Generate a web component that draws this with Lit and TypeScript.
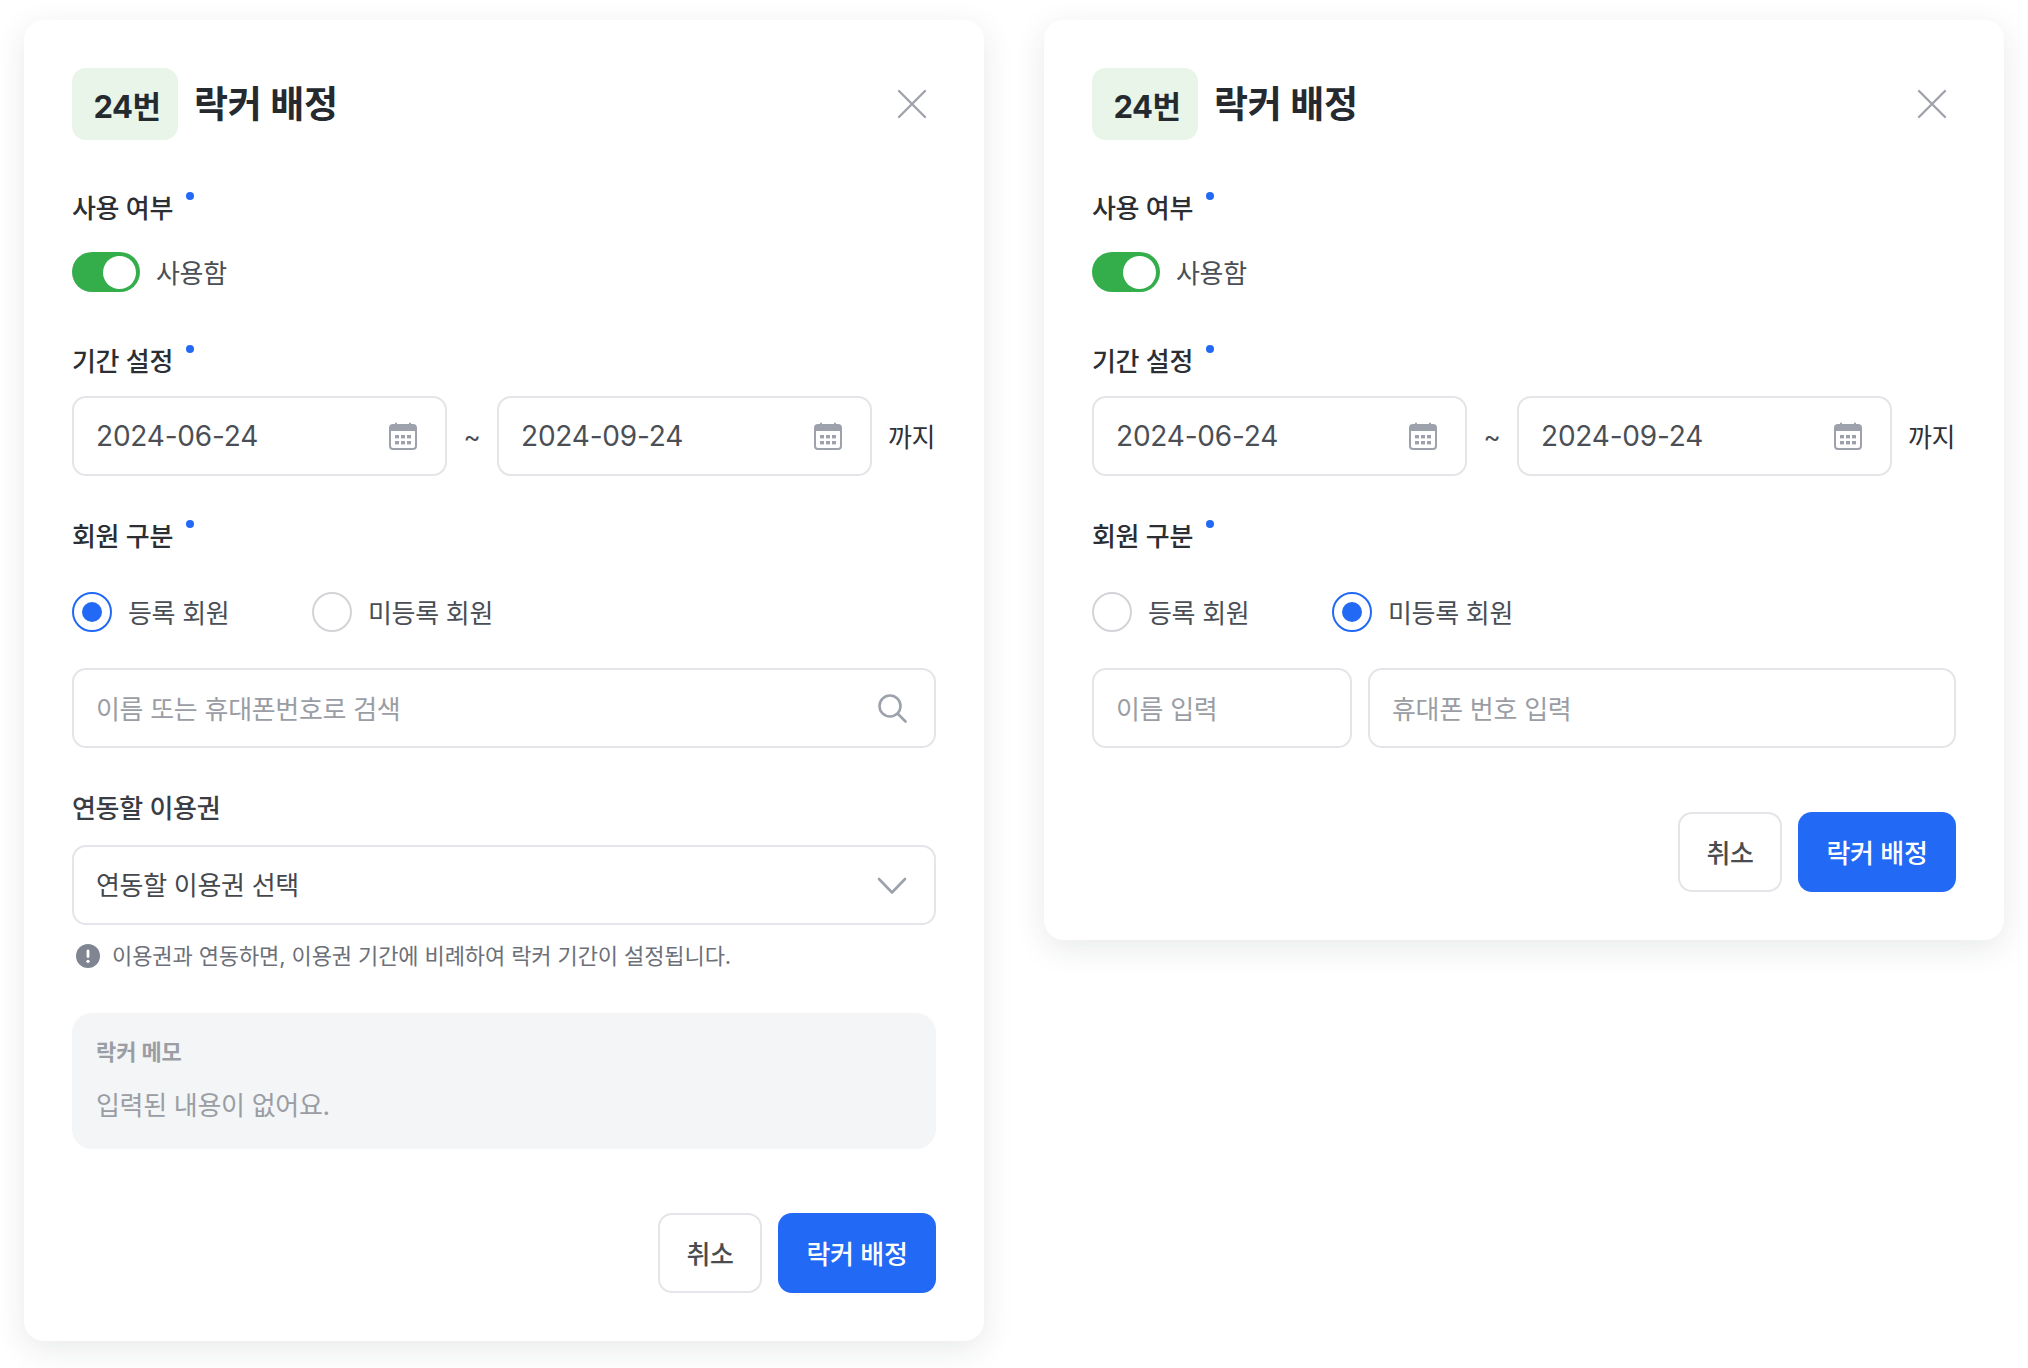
import { LitElement, html, css, svg } from "lit";
import { customElement, property } from "lit/decorators.js";

const closeIcon = svg`<svg class="ico-close" width="32" height="32" viewBox="0 0 32 32" fill="none" stroke="#A0A3AB" stroke-width="2.4" stroke-linecap="round"><path d="M3 3L29 29M29 3L3 29"/></svg>`;
const calIcon = svg`<svg width="30" height="30" viewBox="0 0 30 30" fill="none"><path d="M8 2.5V5M22 2.5V5" stroke="#9CA1AB" stroke-width="2" stroke-linecap="round"/><rect x="2" y="4" width="26" height="24" rx="3" fill="#fff" stroke="#9CA1AB" stroke-width="2"/><path d="M2 7a3 3 0 0 1 3-3h20a3 3 0 0 1 3 3v3H2z" fill="#9CA1AB"/><g fill="#9CA1AB"><rect x="7" y="14" width="4" height="3.4"/><rect x="13" y="14" width="4" height="3.4"/><rect x="19" y="14" width="4" height="3.4"/><rect x="7" y="20" width="4" height="3.4"/><rect x="13" y="20" width="4" height="3.4"/><rect x="19" y="20" width="4" height="3.4"/></g></svg>`;
const searchIcon = svg`<svg width="30" height="30" viewBox="0 0 30 30" fill="none" stroke="#9CA1AB" stroke-width="2.6" stroke-linecap="round"><circle cx="13" cy="13" r="10.5"/><path d="M21 21L28.5 28.5"/></svg>`;
const chevronIcon = svg`<svg class="chev" width="30" height="18" viewBox="0 0 30 18" fill="none" stroke="#9CA1AB" stroke-width="2.6" stroke-linecap="round" stroke-linejoin="round"><path d="M2 2L15 15.5L28 2"/></svg>`;
const infoIcon = svg`<svg width="24" height="24" viewBox="0 0 24 24"><circle cx="12" cy="12" r="12" fill="#7F8692"/><rect x="10.6" y="5.5" width="2.8" height="8.5" rx="1.4" fill="#fff"/><circle cx="12" cy="17.3" r="1.6" fill="#fff"/></svg>`;

@customElement("locker-card")
class LockerCard extends LitElement {
  @property() mode: "member" | "guest" = "member";

  static styles = css`
    :host { display: block; width: 960px; }
    * { box-sizing: border-box; }
    .card {
      background: #fff; border-radius: 20px; padding: 48px;
      box-shadow: 0 8px 32px rgba(30, 35, 45, 0.1);
      display: flex; flex-direction: column;
      font-family: Inter, "Noto Sans CJK KR", sans-serif;
    }
    .head { display: flex; align-items: center; height: 72px; gap: 16px; }
    .badge {
      width: 106px; height: 72px; border-radius: 14px; background: #E9F5E9;
      display: flex; align-items: center; justify-content: center; padding-left: 4px;
      font-size: 31px; font-weight: 700; color: #252A2E; letter-spacing: -0.5px;
    }
    .title { font-size: 37px; font-weight: 700; color: #26292E; letter-spacing: -0.2px; flex: 1; line-height: 1; }
    .close { display: flex; margin-right: 8px; }
    .label {
      font-size: 26px; font-weight: 500; color: #2B2E33; line-height: 36px; height: 36px;
      display: flex; letter-spacing: -0.3px;
    }
    .dot { width: 8px; height: 8px; border-radius: 50%; background: #2269F5; margin: 1px 0 0 13px; }
    .l1 { margin-top: 51px; }
    .toggle-row { display: flex; align-items: center; gap: 16px; margin-top: 25px; height: 40px; }
    .toggle { width: 68px; height: 40px; border-radius: 20px; background: #34AE4B; display: flex; justify-content: flex-end; align-items: center; padding-right: 4px; }
    .knob { width: 33px; height: 33px; border-radius: 50%; background: #fff; }
    .toggle-text { font-size: 26px; color: #4A4E55; letter-spacing: -0.3px; padding-bottom: 2px; }
    .l2 { margin-top: 52px; }
    .dates { display: flex; align-items: center; margin-top: 16px; }
    .field {
      height: 80px; border: 2px solid #E4E5E8; border-radius: 14px; background: #fff;
      display: flex; align-items: center; justify-content: space-between;
      padding: 0 22px; font-size: 28px; color: #4B4F55;
    }
    .date { width: 375px; padding-right: 27px; }
    .date span { letter-spacing: -0.2px; }
    .tilde { width: 50px; text-align: center; font-size: 26px; color: #4A4E55; }
    .until { margin-left: 16px; font-size: 26px; color: #2F3237; letter-spacing: -0.3px; padding-bottom: 2px; }
    .l3 { margin-top: 43px; }
    .radios { display: flex; margin-top: 37px; height: 40px; align-items: center; }
    .radio-item { display: flex; align-items: center; gap: 16px; font-size: 26px; color: #4A4E55; width: 240px; letter-spacing: -0.3px; }
    .radio-item span.txt { padding-bottom: 2px; }
    .radio { width: 40px; height: 40px; border-radius: 50%; border: 2px solid #D3D4D7; background: #fff; display: flex; align-items: center; justify-content: center; flex: none; }
    .radio.on { border-color: #2269F5; }
    .radio.on::after { content: ""; width: 20px; height: 20px; border-radius: 50%; background: #2269F5; }
    .ph { color: #9A9DA4; font-size: 26px; letter-spacing: -0.3px; padding-bottom: 2px; }
    .search { margin-top: 36px; padding-right: 27px; }
    .guest { display: flex; gap: 16px; margin-top: 36px; }
    .guest .name { width: 260px; flex: none; }
    .guest .phone { flex: 1; }
    .l4 { margin-top: 43px; color: #3A3D43; }
    .select { margin-top: 18px; padding-right: 27px; color: #44484E; }
    .select span { font-size: 26px; letter-spacing: -0.3px; padding-bottom: 4px; }
    .chev { margin-top: 2px; }
    .note { display: flex; align-items: center; gap: 12px; margin-top: 18px; padding-left: 4px; font-size: 22px; line-height: 26px; color: #6C7078; letter-spacing: -0.1px; }
    .memo { margin-top: 44px; height: 136px; background: #F3F5F7; border-radius: 20px; padding: 24px 24px; }
    .memo-title { font-size: 22px; font-weight: 700; color: #9A9EA4; line-height: 30px; letter-spacing: -0.1px; }
    .memo-body { font-size: 26px; color: #9A9DA4; margin-top: 21px; line-height: 36px; letter-spacing: -0.3px; }
    .actions { display: flex; justify-content: flex-end; gap: 16px; margin-top: 64px; }
    .btn { height: 80px; border-radius: 14px; display: flex; align-items: center; justify-content: center; font-size: 26px; font-weight: 500; letter-spacing: -0.3px; padding-bottom: 2px; }
    .cancel { width: 104px; border: 2px solid #E4E5E8; background: #fff; color: #4A4C50; }
    .ok { width: 158px; background: #2269F5; color: #fff; }
  `;

  private radio(text: string, on: boolean) {
    return html`<div class="radio-item"><span class="radio ${on ? "on" : ""}"></span><span class="txt">${text}</span></div>`;
  }

  private date(value: string) {
    return html`<div class="field date"><span>${value}</span>${calIcon}</div>`;
  }

  render() {
    const member = this.mode === "member";
    return html`
      <div class="card">
        <div class="head">
          <div class="badge">24번</div>
          <div class="title">락커 배정</div>
          <div class="close">${closeIcon}</div>
        </div>
        <div class="label l1">사용 여부<i class="dot"></i></div>
        <div class="toggle-row">
          <div class="toggle"><div class="knob"></div></div>
          <div class="toggle-text">사용함</div>
        </div>
        <div class="label l2">기간 설정<i class="dot"></i></div>
        <div class="dates">
          ${this.date("2024-06-24")}
          <div class="tilde">~</div>
          ${this.date("2024-09-24")}
          <div class="until">까지</div>
        </div>
        <div class="label l3">회원 구분<i class="dot"></i></div>
        <div class="radios">
          ${this.radio("등록 회원", member)}
          ${this.radio("미등록 회원", !member)}
        </div>
        ${member
          ? html`
              <div class="field search"><span class="ph">이름 또는 휴대폰번호로 검색</span>${searchIcon}</div>
              <div class="label l4">연동할 이용권</div>
              <div class="field select"><span>연동할 이용권 선택</span>${chevronIcon}</div>
              <div class="note">${infoIcon}<span>이용권과 연동하면, 이용권 기간에 비례하여 락커 기간이 설정됩니다.</span></div>
              <div class="memo">
                <div class="memo-title">락커 메모</div>
                <div class="memo-body">입력된 내용이 없어요.</div>
              </div>
            `
          : html`
              <div class="guest">
                <div class="field name"><span class="ph">이름 입력</span></div>
                <div class="field phone"><span class="ph">휴대폰 번호 입력</span></div>
              </div>
            `}
        <div class="actions">
          <div class="btn cancel">취소</div>
          <div class="btn ok">락커 배정</div>
        </div>
      </div>
    `;
  }
}

@customElement("app-root")
export class AppRoot extends LitElement {
  static styles = css`
    :host { display: block; background: #fff; min-height: 1368px; }
    .wrap { display: flex; align-items: flex-start; gap: 60px; padding: 20px 24px; }
  `;
  render() {
    return html`<div class="wrap">
      <locker-card mode="member"></locker-card>
      <locker-card mode="guest"></locker-card>
    </div>`;
  }
}
